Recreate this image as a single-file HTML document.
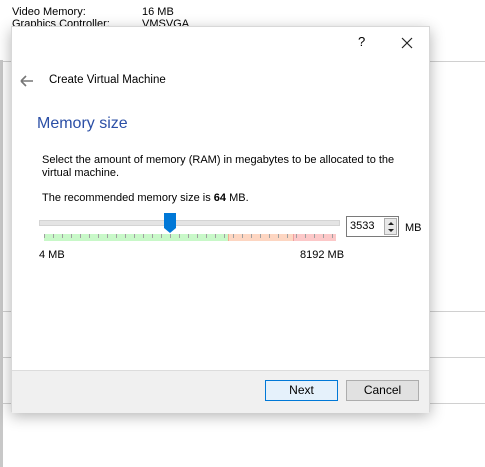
<!DOCTYPE html>
<html><head><meta charset="utf-8"><style>
body{margin:0;width:485px;height:467px;background:#fff;position:relative;overflow:hidden;font-family:"Liberation Sans",sans-serif;font-size:11px;color:#000}
.a{position:absolute}
.hl{position:absolute;height:1px;background:#d0d0d0}
</style></head><body>
<div class="a" style="left:12px;top:6px">Video Memory:</div>
<div class="a" style="left:142px;top:6px">16 MB</div>
<div class="a" style="left:12px;top:18px">Graphics Controller:</div>
<div class="a" style="left:142px;top:18px">VMSVGA</div>
<div class="a" style="left:0;top:60px;width:3px;height:407px;background:#c8c8c8"></div>
<div class="hl" style="left:3px;top:61px;width:482px"></div>
<div class="hl" style="left:3px;top:311px;width:482px"></div>
<div class="hl" style="left:3px;top:357px;width:482px"></div>
<div class="hl" style="left:3px;top:403px;width:482px"></div>
<div class="a" style="left:11px;top:26px;width:419px;height:386px;background:#fff;box-shadow:0 4px 14px rgba(0,0,0,0.3);border:1px solid #d8d8d8;box-sizing:border-box">
 <div class="a" style="left:346px;top:7px;font-size:13px">?</div>
 <svg class="a" style="left:389px;top:10px" width="12" height="12"><path d="M1 1L11 11M11 1L1 11" stroke="#222" stroke-width="1.2"/></svg>
 <svg class="a" style="left:8px;top:48px" width="14" height="12"><path d="M1 6H13M1 6L6 1M1 6L6 11" stroke="#777" stroke-width="1.6" fill="none"/></svg>
 <div class="a" style="left:37px;top:47px;font-size:11.5px">Create Virtual Machine</div>
 <div class="a" style="left:25px;top:88px;font-size:16px;color:#2b4fa6">Memory size</div>
 <div class="a" style="left:30px;top:127px;width:360px;line-height:13px">Select the amount of memory (RAM) in megabytes to be allocated to the virtual machine.</div>
 <div class="a" style="left:30px;top:165px">The recommended memory size is <b>64</b> MB.</div>
 <div class="a" style="left:27px;top:193px;width:299px;height:4px;background:#e4e4e4;border:1px solid #d4d4d4"></div>
 <div class="a" style="left:32px;top:207px;width:184px;height:7px;background:#c8f8c8"></div>
 <div class="a" style="left:216px;top:207px;width:65px;height:7px;background:#fdd6c2;border-left:1px solid #f0b090"></div>
 <div class="a" style="left:281px;top:207px;width:42px;height:7px;background:#fcc8c8;border-left:1px solid #f0a0a0"></div>
 <svg class="a" style="left:32px;top:207px" width="292" height="4"><g stroke="#a0a0a0" stroke-width="1">
 <path d="M0.5 0V4M9.5 0V4M18.5 0V4M27.5 0V4M36.5 0V4M45.5 0V4M54.5 0V4M63.5 0V4M72.5 0V4M81.5 0V4M90.5 0V4M99.5 0V4M108.5 0V4M117.5 0V4M126.5 0V4M135.5 0V4M144.5 0V4M153.5 0V4M162.5 0V4M171.5 0V4M180.5 0V4M189.5 0V4M198.5 0V4M207.5 0V4M216.5 0V4M225.5 0V4M234.5 0V4M243.5 0V4M252.5 0V4M261.5 0V4M270.5 0V4M279.5 0V4M288.5 0V4"/></g></svg>
 <svg class="a" style="left:152px;top:186px" width="12" height="20"><path d="M0 0H12V15L6 20L0 15Z" fill="#0078d7"/></svg>
 <div class="a" style="left:334px;top:189px;width:53px;height:21px;border:1px solid #7a7a7a;box-sizing:border-box;background:#fff">
  <div class="a" style="left:3px;top:3px">3533</div>
  <div class="a" style="left:37px;top:1px;width:13px;height:17px;border:1px solid #adadad;box-sizing:border-box;background:#e8e8e8"></div>
  <svg class="a" style="left:40px;top:3px" width="8" height="14"><path d="M1 5L4 2L7 5ZM1 9L4 12L7 9Z" fill="#222"/></svg>
 </div>
 <div class="a" style="left:393px;top:195px">MB</div>
 <div class="a" style="left:27px;top:222px">4 MB</div>
 <div class="a" style="left:288px;top:222px">8192 MB</div>
 <div class="a" style="left:0;top:343px;width:417px;height:42px;background:#f0f0f0;border-top:1px solid #dcdcdc"></div>
 <div class="a" style="left:253px;top:353px;width:73px;height:21px;background:#e5f1fb;border:1px solid #0078d7;box-sizing:border-box;text-align:center;line-height:19px;font-size:12px">Next</div>
 <div class="a" style="left:334px;top:353px;width:73px;height:21px;background:#e1e1e1;border:1px solid #adadad;box-sizing:border-box;text-align:center;line-height:19px;font-size:12px">Cancel</div>
</div>
</body></html>
